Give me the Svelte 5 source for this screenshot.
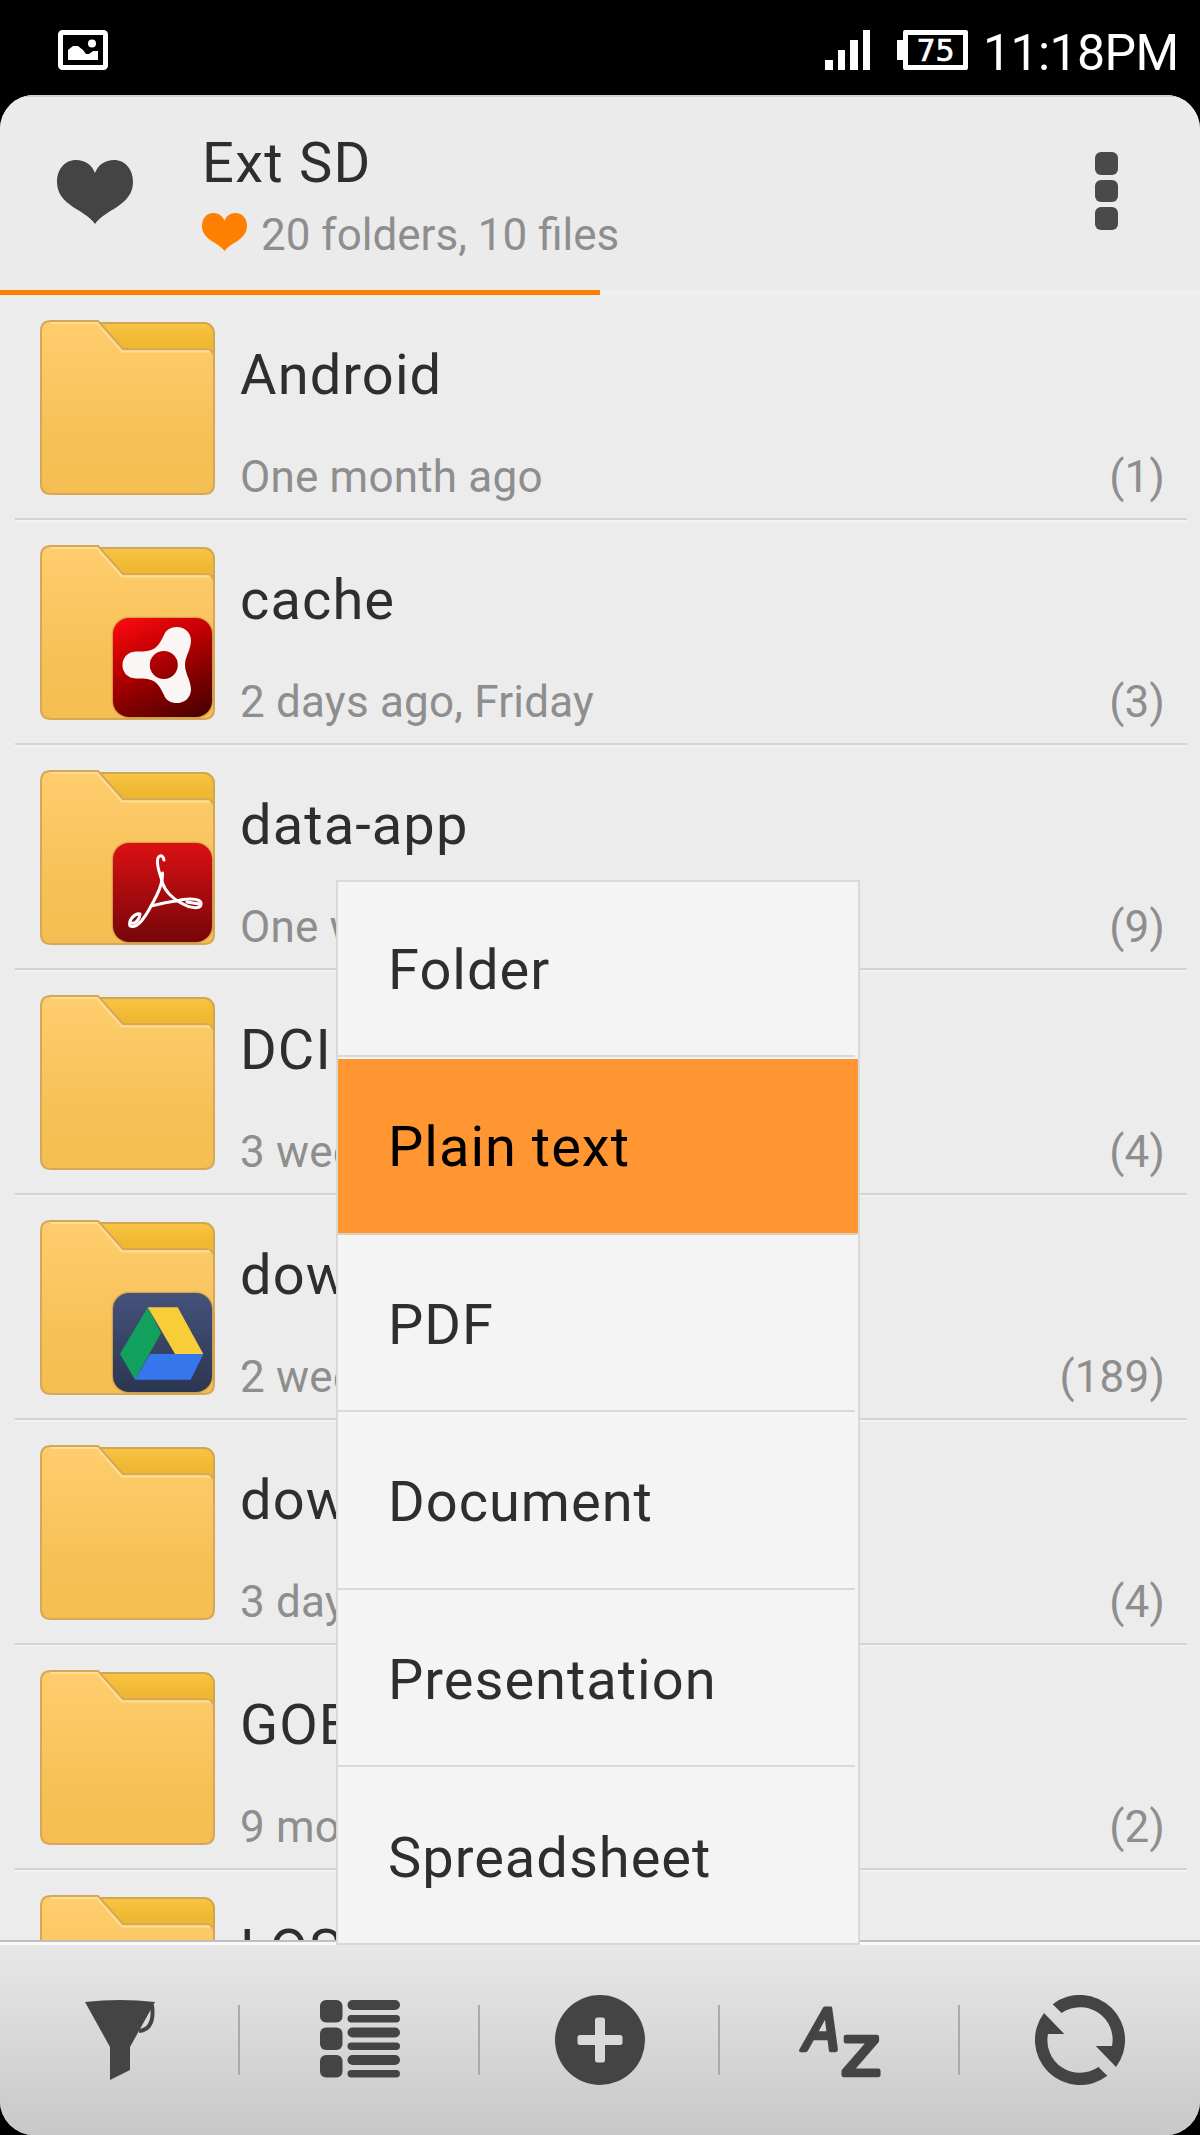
<script lang="ts">
	type Entry = { name: string; date: string; count?: number; badge?: 'air' | 'pdf' | 'drive' };

	const entries: Entry[] = [
		{ name: 'Android', date: 'One month ago', count: 1 },
		{ name: 'cache', date: '2 days ago, Friday', count: 3, badge: 'air' },
		{ name: 'data-app', date: 'One week ago', count: 9, badge: 'pdf' },
		{ name: 'DCIM', date: '3 weeks ago', count: 4 },
		{ name: 'download', date: '2 weeks ago', count: 189, badge: 'drive' },
		{ name: 'downloads', date: '3 days ago', count: 4 },
		{ name: 'GOBackup', date: '9 months ago', count: 2 },
		{ name: 'LOST.DIR', date: '' }
	];

	const menu = ['Folder', 'Plain text', 'PDF', 'Document', 'Presentation', 'Spreadsheet'];
	let active = $state('Plain text');

	const arrow = 'M17.7 9.2A45 45 0 0 1 81 72L60.7 51H77A32.5 32.5 0 0 0 26.600 18Z';
</script>

{#snippet heart(cls: string)}
	<svg class={cls} viewBox="0 0 76 64" preserveAspectRatio="none">
		<path
			d="M38 13C35 5 28 0 19 0 8 0 0 9 0 22c0 11 6 18 16 25 10 6 18 11 22 17 4-6 12-11 22-17 10-7 16-14 16-25C76 9 68 0 57 0c-9 0-16 5-19 13z"
		/>
	</svg>
{/snippet}

<svg class="defs" width="0" height="0">
	<defs>
		<linearGradient id="front" x1="0" y1="0" x2="0" y2="1">
			<stop offset="0" stop-color="#ffcd6e" />
			<stop offset="0.7" stop-color="#f5c055" />
			<stop offset="1" stop-color="#f5be53" />
		</linearGradient>
		<linearGradient id="back" x1="0" y1="0" x2="0" y2="1">
			<stop offset="0" stop-color="#f8c544" />
			<stop offset="0.2" stop-color="#f0b731" />
		</linearGradient>
	</defs>
</svg>

<div class="phone">
	<div class="status">
		<svg class="picture" width="50" height="40" viewBox="0 0 50 40">
			<rect x="2.5" y="2.5" width="45" height="35" rx="2" fill="none" stroke="#fff" stroke-width="5" />
			<path d="M10 30V20l5-4h5l5 4 3 4h3l4-3h5v9z" />
			<circle cx="34" cy="13.500" r="4" />
		</svg>
		<div class="signal">
			<i class="b1"></i><i class="b2"></i><i class="b3"></i><i class="b4"></i>
		</div>
		<div class="battery"><span>75</span></div>
		<div class="clock">11:18PM</div>
	</div>

	<div class="window">
		<header>
			{@render heart('fav')}
			<div class="titles">
				<h1>Ext SD</h1>
				<p>{@render heart('mini')}20 folders, 10 files</p>
			</div>
			<div class="more"><i></i><i></i><i></i></div>
		</header>
		<div class="tabline"></div>

		<div class="list">
			{#each entries as entry}
				<div class="row">
					<div class="thumb">
						<svg width="175" height="175" viewBox="0 0 175 175">
							<rect x="20" y="3" width="154" height="100" rx="10" fill="url(#back)" stroke="#cfa653" stroke-width="2" />
							<path
								d="M11 1H58L83 29H165Q174 29 174 38V164Q174 174 164 174H11Q1 174 1 164V11Q1 1 11 1Z"
								fill="url(#front)"
								stroke="#d5a858"
								stroke-width="2"
							/>
							<path d="M11 3H57L82 31.500H170" fill="none" stroke="#ffdd95" stroke-width="2" />
						</svg>
						{#if entry.badge}
							<div class="badge {entry.badge}">
								<svg width="99" height="99" viewBox="0 0 99 99">
									{#if entry.badge === 'air'}
										<path
											fill="#faf6f6"
											fill-rule="evenodd"
											d="M23 33.500H30C43 33 46 27 51 17C55 5 77 6 78 22C78 32 72 38 72 47C72 56 78 62 78 72C77 88 55 89 51 77C46 67 43 61 30 60.500H23C5 60 5 34 23 33.500ZM50.800 33A14 14 0 1 0 50.800 61A14 14 0 1 0 50.800 33Z"
										/>
									{:else if entry.badge === 'pdf'}
										<g fill="none" stroke="#fff" stroke-linecap="round" stroke-linejoin="round" stroke-width="3">
											<path
												d="M51 17C50 11 44 11 44.500 20C45 28 48 33 49.500 40C52 48 60 56 68 60C76 65 88 67 88 61C89 55 74 55 63 58C54 59 46 61 38 63"
											/>
											<path
												d="M49.500 30C50 42 43 54 37 65C31 76 23 86 17 83C15 77 22 70 27 71C27 76 22 81 19 80M74 59L86 61"
											/>
										</g>
									{:else}
										<path fill="#12a15c" d="M34.700 14.300L48 40L22 86.700L7 61Z" />
										<path fill="#f7cd38" d="M34.700 14.300H64.700L90.300 61H62Z" />
										<path fill="#3777ee" d="M37 61H90.300L77.700 86.700H22Z" />
									{/if}
								</svg>
							</div>
						{/if}
					</div>
					<div class="info">
						<div class="name">{entry.name}</div>
						<div class="meta">
							<span>{entry.date}</span>
							{#if entry.count}<span>({entry.count})</span>{/if}
						</div>
					</div>
				</div>
			{/each}
		</div>

		<nav>
			<button aria-label="Filter">
				<svg width="90" height="90" viewBox="0 0 90 90">
					<path d="M10 7Q45 3 80 7L55 52V75L35 85V52Z" />
					<path d="M77 10C79 24 76 35 64 36" fill="none" stroke="#444" stroke-width="4" />
				</svg>
			</button>
			<button aria-label="View">
				<svg width="90" height="90" viewBox="0 0 90 90">
					{#each [5, 32.5, 60] as y}
						<rect x="5" {y} width="22.500" height="22.500" rx="6" />
						<rect x="32.500" {y} width="52.500" height="10" rx="5" />
						<rect x="32.500" y={y + 15} width="52.500" height="7.500" rx="3.700" />
					{/each}
				</svg>
			</button>
			<button aria-label="New">
				<svg width="90" height="90" viewBox="0 0 90 90">
					<circle cx="45" cy="45" r="45" />
					<rect class="cut" x="22.500" y="40" width="45" height="10" rx="2.500" />
					<rect class="cut" x="40" y="22.500" width="10" height="45" rx="2.500" />
				</svg>
			</button>
			<button aria-label="Sort">
				<svg class="az" width="90" height="90" viewBox="0 0 90 90">
					<text transform="translate(6 54.500) skewX(-12)" font-size="60" textLength="35" lengthAdjust="spacingAndGlyphs">A</text>
					<text x="47" y="79.500" font-size="56" textLength="38" lengthAdjust="spacingAndGlyphs">Z</text>
				</svg>
			</button>
			<button aria-label="Refresh">
				<svg width="90" height="90" viewBox="0 0 90 90">
					<path d={arrow} />
					<path d={arrow} transform="rotate(180 45 45)" />
				</svg>
			</button>
		</nav>
	</div>

	<div class="menu">
		{#each menu as item}
			<button class="item" class:active={item === active} onclick={() => (active = item)}>
				<span>{item}</span>
			</button>
		{/each}
	</div>
</div>

<style>
	:global(body) {
		background: #000;
	}
	.defs {
		position: absolute;
	}
	.phone {
		position: relative;
		width: 1200px;
		height: 2135px;
		display: flex;
		flex-direction: column;
		overflow: hidden;
		background: #000;
		font-family: Roboto, 'Liberation Sans', sans-serif;
		color: #2e2e2e;
	}
	.phone svg {
		display: block;
	}

	/* status bar */
	.status {
		flex: none;
		height: 95px;
		box-sizing: border-box;
		padding: 30px 24px 0 58px;
		display: flex;
		align-items: flex-start;
		color: #fff;
	}
	.picture {
		fill: #fff;
	}
	.signal {
		display: flex;
		align-items: flex-end;
		gap: 5px;
		height: 40px;
		margin-left: auto;
	}
	.signal i {
		width: 7.5px;
		background: #fff;
	}
	.b1 {
		height: 10px;
	}
	.b2 {
		height: 20px;
	}
	.b3 {
		height: 30px;
	}
	.b4 {
		height: 40px;
	}
	.battery {
		display: flex;
		align-items: center;
		margin-left: 27px;
	}
	.battery::before {
		content: '';
		width: 6px;
		height: 20px;
		background: #fff;
	}
	.battery span {
		box-sizing: border-box;
		width: 65px;
		height: 40px;
		border: 5px solid #fff;
		border-radius: 2px;
		font: 30px/31px 'DejaVu Sans', sans-serif;
		text-align: center;
		-webkit-text-stroke: 0.7px #fff;
	}
	.clock {
		width: 193px;
		margin-left: 15px;
		font-size: 50px;
		line-height: 47px;
		letter-spacing: -0.6px;
		white-space: nowrap;
	}

	.window {
		flex: 1;
		min-height: 0;
		display: flex;
		flex-direction: column;
		overflow: hidden;
		border-radius: 34px;
		background: #ececec;
	}
	header {
		flex: none;
		height: 195px;
		box-sizing: border-box;
		border-top: 2px solid #cfcfcf;
		padding: 0 82px 0 57px;
		display: flex;
		align-items: flex-start;
		background: #ebebeb;
	}
	.fav {
		width: 76px;
		height: 64px;
		margin-top: 63px;
		fill: #444;
	}
	.titles {
		flex: 1;
		margin: 33px 0 0 69px;
	}
	h1,
	p {
		margin: 0;
		font-weight: 400;
		white-space: nowrap;
	}
	h1 {
		font-size: 56px;
		line-height: 66px;
		letter-spacing: 1.3px;
	}
	p {
		display: flex;
		align-items: center;
		gap: 14px;
		font-size: 44px;
		line-height: 78px;
		color: #8e8e8e;
	}
	.mini {
		width: 45px;
		height: 38px;
		margin-top: -6px;
		fill: #ff7f00;
	}
	.more {
		display: flex;
		flex-direction: column;
		gap: 5px;
		margin-top: 55px;
	}
	.more i {
		width: 23px;
		height: 22.5px;
		border-radius: 6px;
		background: #4a4a4a;
	}
	.tabline {
		flex: none;
		height: 5px;
		background: linear-gradient(90deg, #ff7f00 600px, #f0f0f0 600px);
	}

	/* file list */
	.list {
		flex: 1;
		min-height: 0;
		overflow: hidden;
	}
	.row {
		height: 225px;
		box-sizing: border-box;
		margin: 0 13px 0 15px;
		padding: 25px 22px 0 25px;
		display: flex;
		border-bottom: 2px solid #d3d3d3;
		box-shadow: 0 2px #f2f2f2;
	}
	.thumb {
		position: relative;
		flex: none;
		width: 175px;
		height: 175px;
	}
	.badge {
		position: absolute;
		left: 73px;
		top: 73px;
		width: 99px;
		height: 99px;
		border-radius: 16px;
		box-shadow: 0 0 2px rgba(80, 40, 0, 0.8);
	}
	.air {
		background: linear-gradient(155deg, #ff0c10, #c40003 35%, #8e0000 60%, #430000);
	}
	.pdf {
		background: linear-gradient(#dc1013, #75060a);
	}
	.drive {
		background: linear-gradient(#45527b, #2b3652);
	}
	.info {
		flex: 1;
		margin-left: 25px;
		white-space: nowrap;
	}
	.name {
		padding-top: 22px;
		font-size: 56px;
		line-height: 66px;
		letter-spacing: 1.1px;
	}
	.meta {
		display: flex;
		justify-content: space-between;
		padding-top: 43px;
		font-size: 44px;
		line-height: 53px;
		letter-spacing: 0.2px;
		color: #8e8e8e;
	}

	/* bottom toolbar */
	nav {
		flex: none;
		height: 195px;
		box-sizing: border-box;
		border-top: 2px solid #bfbfbf;
		box-shadow: inset 0 3px #fafafa;
		padding-top: 3px;
		display: grid;
		grid-template-columns: repeat(5, 1fr);
		background: linear-gradient(#e8e8e8, #c8c8c8);
	}
	nav button {
		padding: 0;
		border: 0;
		display: flex;
		align-items: center;
		justify-content: center;
		background: linear-gradient(#aaa, #aaa) no-repeat right 0 top 60px / 2px 70px;
	}
	nav button:last-child {
		background: none;
	}
	nav svg {
		fill: #444;
	}
	.cut {
		fill: #d9d9d9;
	}
	.az text {
		font-family: 'Liberation Sans', sans-serif;
		stroke: #444;
		stroke-width: 4.5px;
		stroke-linejoin: round;
	}

	/* popup menu */
	.menu {
		position: absolute;
		left: 336px;
		top: 880px;
		width: 524px;
		height: 1065px;
		box-sizing: border-box;
		border: 2px solid #d9d9d9;
		background: #f4f4f4;
		display: grid;
		grid-template-rows: 175px repeat(4, 177.5px) 1fr;
	}
	.item {
		padding: 2px 0 0;
		border: 0;
		border-bottom: 2px solid #d9d9d9;
		margin-right: 3px;
		background: none;
		text-align: left;
		color: #2e2e2e;
		font-family: inherit;
		font-size: 56px;
		letter-spacing: 1px;
	}
	.item:last-child {
		border-bottom: 0;
	}
	.item span {
		display: flex;
		align-items: center;
		height: 100%;
		padding: 3px 0 0 50px;
		box-sizing: border-box;
	}
	.item:first-child span {
		padding-top: 1px;
	}
	.active {
		margin-right: 0;
		border-bottom-color: #e2cdb8;
		color: #000;
	}
	.active span {
		background: #ff9632;
	}
</style>
